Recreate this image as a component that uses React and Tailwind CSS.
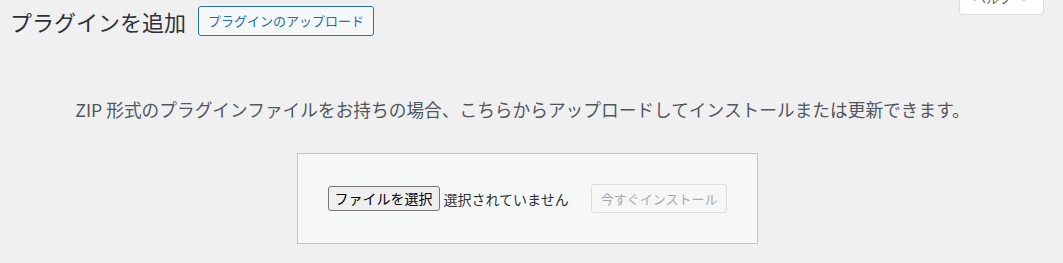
import React from 'react'

const jp = { fontFamily: '"Noto Sans CJK JP", "Noto Sans", sans-serif' }

export default function App() {
  return (
    <div className="relative min-h-[263px] w-full overflow-hidden bg-[#f0f0f1] text-[#1d2327]" style={jp}>
      {/* help tab, mostly scrolled off the top */}
      <div className="absolute right-[19px] top-0 flex h-[15px] w-[85px] items-end rounded-b-[4px] border-x border-b border-[#dcdcde] bg-white pl-[13px]">
        <span className="mb-[10px] flex items-center whitespace-nowrap text-[13px] leading-[13px] text-[#646970]">
          ヘルプ
          <svg className="ml-[8px]" width="8" height="6" viewBox="0 0 8 6">
            <path d="M0 0h8L4 6z" fill="#646970" />
          </svg>
        </span>
      </div>

      <div className="pl-[2px] pr-[20px]">
        <div className="mt-[6px] flex h-[30px] items-center pl-[8px]">
          <h1 className="whitespace-nowrap text-[22px] font-normal leading-[30px] text-[#2c3338]">プラグインを追加</h1>
          <button className="ml-[12px] h-[30px] whitespace-nowrap rounded-[3px] border border-[#2271b1] bg-[#f6f7f7] px-[9px] text-[13px] leading-[28px] text-[#2271b1]">
            プラグインのアップロード
          </button>
        </div>

        <p className="mt-[60px] whitespace-nowrap text-center text-[17.7px] leading-[27px] text-[#50575e]">
          ZIP 形式のプラグインファイルをお持ちの場合、こちらからアップロードしてインストールまたは更新できます。
        </p>

        <div className="mt-[30px] flex justify-center pl-[10px]">
          <form className="flex items-center whitespace-nowrap border border-[#c3c4c7] bg-[#f6f7f7] p-[30px]">
            <button type="button" className="h-[25px] shrink-0 rounded-[3px] border border-[#767676] bg-[#efefef] px-[6px] text-[14px] leading-[23px] text-black">
              ファイルを選択
            </button>
            <span className="ml-[4px] shrink-0 text-[14px] leading-[20px] text-[#2c3338]">選択されていません</span>
            <button type="button" disabled className="ml-[22px] h-[29px] shrink-0 rounded-[3px] border border-[#dcdcde] bg-[#f6f7f7] px-[9px] text-[13px] leading-[27px] text-[#a7aaad]">
              今すぐインストール
            </button>
          </form>
        </div>
      </div>
    </div>
  )
}
